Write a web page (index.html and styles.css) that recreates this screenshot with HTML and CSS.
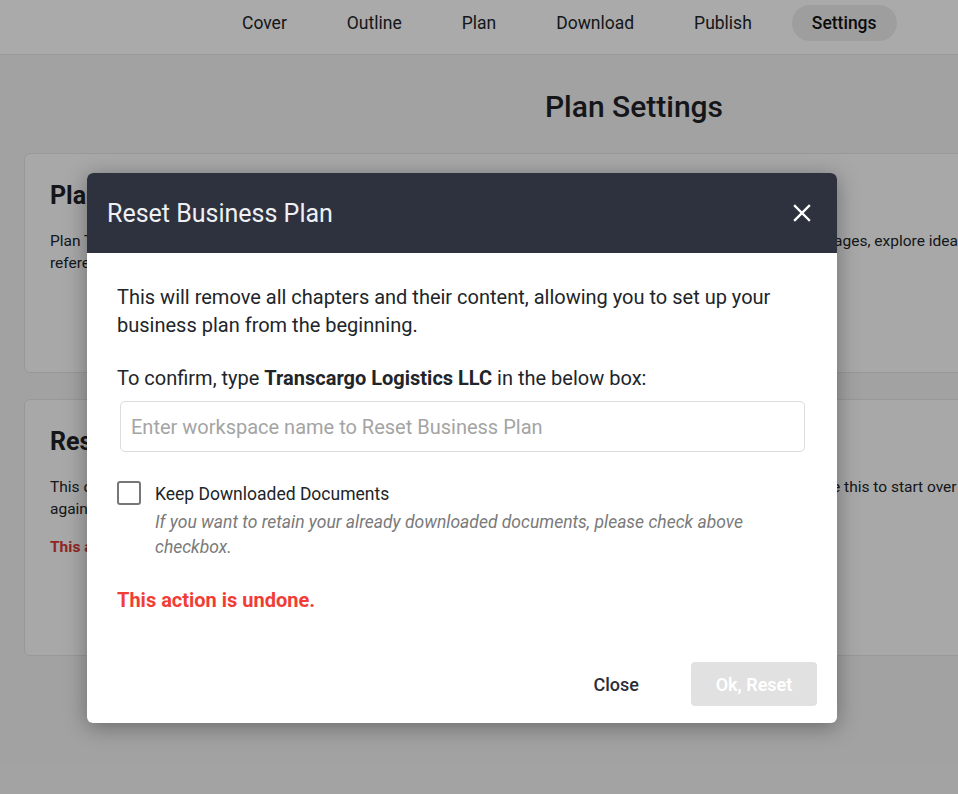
FILE: index.html
```html
<!DOCTYPE html>
<html lang="en">
<head>
<meta charset="utf-8">
<title>Plan Settings</title>
<link rel="stylesheet" href="styles.css">
</head>
<body>
<header class="topbar">
  <nav class="nav">
    <a class="nav-item">Cover</a>
    <a class="nav-item">Outline</a>
    <a class="nav-item">Plan</a>
    <a class="nav-item">Download</a>
    <a class="nav-item">Publish</a>
    <a class="nav-item active">Settings</a>
  </nav>
</header>
<main class="main">
  <h1 class="page-title">Plan Settings</h1>
  <section class="card card-plan">
    <h2 class="card-title">Plan Template</h2>
    <p class="card-text">Plan Template lets you select a ready-made structure for your business plan so that you can easily skip the blank pages, explore ideas, reference examples and follow a proven layout while writing every chapter of your plan.</p>
  </section>
  <section class="card card-reset">
    <h2 class="card-title">Reset Business Plan</h2>
    <p class="card-text">This option removes all chapters and their content from your business plan. If you ever really need a fresh start, use this to start over again with a completely empty business plan.</p>
    <p class="card-warn">This action is undone.</p>
  </section>
</main>

<div class="overlay"></div>
<div class="modal">
  <div class="modal-header">
    <h3 class="modal-title">Reset Business Plan</h3>
    <button class="modal-close" aria-label="Close">
      <svg width="20" height="20" viewBox="0 0 20 20"><path d="M3 3 L17 17 M17 3 L3 17" stroke="#ffffff" stroke-width="2.4" stroke-linecap="square" fill="none"/></svg>
    </button>
  </div>
  <div class="modal-body">
    <p class="intro">This will remove all chapters and their content, allowing you to set up your business plan from the beginning.</p>
    <p class="confirm">To confirm, type <strong>Transcargo Logistics LLC</strong> in the below box:</p>
    <input class="name-input" type="text" placeholder="Enter workspace name to Reset Business Plan">
    <div class="check-row">
      <span class="checkbox"></span>
      <div class="check-text">
        <div class="check-label">Keep Downloaded Documents</div>
        <div class="check-help">If you want to retain your already downloaded documents, please check above checkbox.</div>
      </div>
    </div>
    <p class="warn">This action is undone.</p>
  </div>
  <div class="modal-footer">
    <button class="btn-close">Close</button>
    <button class="btn-reset">Ok, Reset</button>
  </div>
</div>
</body>
</html>
```
FILE: styles.css
```css
* { box-sizing: border-box; }
html, body { margin: 0; padding: 0; }
body {
  font-family: Roboto, "Liberation Sans", Arial, sans-serif;
  color: #212529;
  background: #f3f4f3;
  width: 958px;
  height: 794px;
  overflow: hidden;
  position: relative;
}
.topbar {
  background: #ffffff;
  border-bottom: 1px solid #e4e4e4;
  padding: 5px 0 13px;
}
.nav {
  display: flex;
  gap: 20px;
  padding-left: 222px;
}
.nav-item {
  height: 36px;
  padding: 0 20px;
  border-radius: 18px;
  font-size: 17.5px;
  line-height: 37px;
  color: #212529;
}
.nav-item.active {
  background: #eeeeee;
  font-weight: 500;
  color: #111;
}
.main {
  width: 1268px;
  padding: 0 24px;
}
.page-title {
  margin: 34px 0 28px;
  text-align: center;
  font-size: 30px;
  line-height: 36px;
  font-weight: 500;
  color: #1f2228;
}
.card {
  background: #fcfcfc;
  border: 1px solid #e4e4e4;
  border-radius: 6px;
  padding: 26px 25px;
}
.card-plan { height: 220px; }
.card-reset { height: 257px; margin-top: 26px; }
.card-title {
  margin: 0 0 18px;
  font-size: 25px;
  line-height: 32px;
  font-weight: 700;
  color: #1e2126;
}
.card-text {
  margin: 0;
  font-size: 15.5px;
  line-height: 22px;
  width: 925px;
}
.card-warn {
  margin: 18px 0 0;
  font-size: 15.5px;
  font-weight: 700;
  color: #d93a36;
}
.overlay {
  position: absolute;
  inset: 0;
  background: rgba(0, 0, 0, 0.333);
}
.modal {
  position: absolute;
  left: 87px;
  top: 173px;
  width: 750px;
  height: 550px;
  background: #ffffff;
  border-radius: 6px;
  box-shadow: 0 4px 22px rgba(0, 0, 0, 0.35);
  display: flex;
  flex-direction: column;
}
.modal-header {
  height: 80px;
  background: #2e323f;
  border-radius: 6px 6px 0 0;
  display: flex;
  align-items: center;
  justify-content: space-between;
  padding: 0 25px 0 20px;
}
.modal-title {
  margin: 0;
  font-size: 25px;
  font-weight: 400;
  color: #eef0f4;
}
.modal-close {
  background: none;
  border: 0;
  padding: 0;
  width: 20px;
  height: 20px;
  display: flex;
}
.modal-body {
  padding: 30px 32px 0 30px;
}
.intro, .confirm {
  margin: 0;
  font-size: 20px;
  line-height: 28px;
  color: #212529;
}
.confirm { margin-top: 25px; }
.confirm strong { font-weight: 700; }
.name-input {
  display: block;
  margin: 9px 0 0 3px;
  width: 685px;
  height: 51px;
  border: 1px solid #dcdcdc;
  border-radius: 5px;
  padding: 0 10px;
  font-family: inherit;
  font-size: 20px;
  color: #212529;
  outline: none;
}
.name-input::placeholder { color: #a4a4a4; }
.check-row {
  display: flex;
  margin-top: 28px;
}
.checkbox {
  flex: none;
  width: 24px;
  height: 24px;
  margin-top: 1px;
  border: 2px solid #777;
  border-radius: 3px;
  margin-right: 14px;
}
.check-text { flex: 1; }
.check-label {
  font-size: 17.5px;
  line-height: 28px;
  color: #212529;
}
.check-help {
  font-size: 17.5px;
  line-height: 25px;
  font-style: italic;
  color: #7a7a7a;
  margin-top: 2px;
}
.warn {
  margin: 26px 0 0;
  font-size: 20px;
  line-height: 28px;
  font-weight: 700;
  color: #f23d36;
}
.modal-footer {
  margin-top: auto;
  display: flex;
  justify-content: flex-end;
  align-items: center;
  gap: 32px;
  padding: 0 20px 17px;
}
.btn-close, .btn-reset {
  height: 44px;
  border: 0;
  border-radius: 4px;
  font-family: inherit;
  font-size: 18px;
}
.btn-close {
  background: none;
  padding: 0 20px;
  font-weight: 500;
  color: #2a2d37;
}
.btn-reset {
  width: 126px;
  background: #e1e1e1;
  color: #ffffff;
  font-weight: 600;
}
```
